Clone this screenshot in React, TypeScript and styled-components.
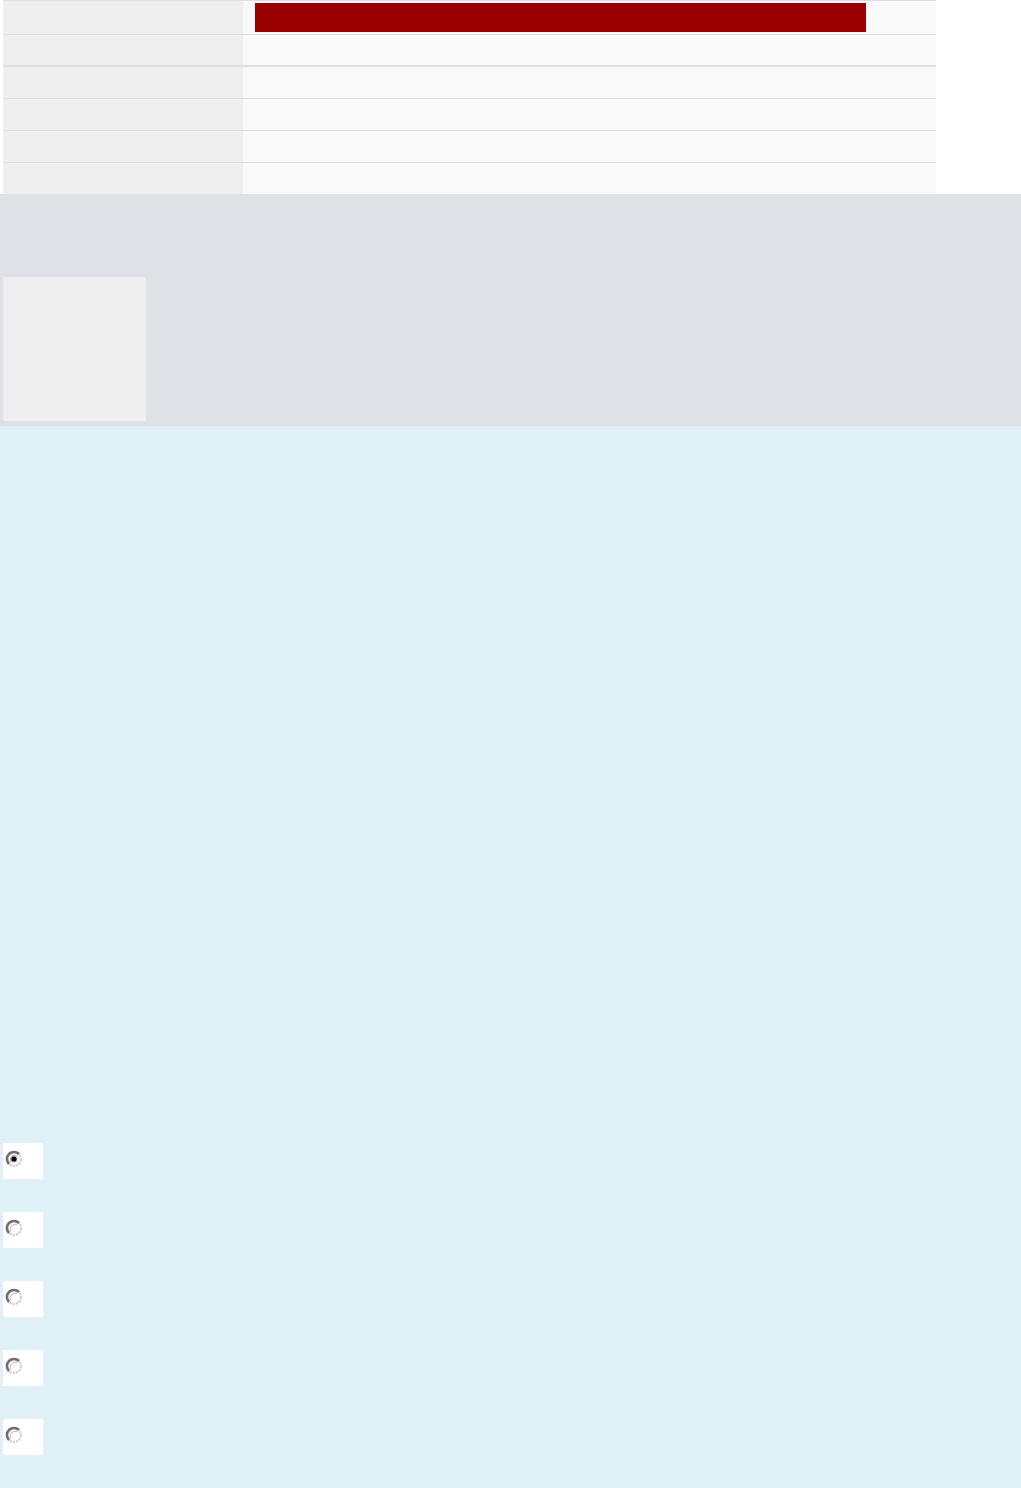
import { createGlobalStyle, styled } from "styled-components";

const GlobalStyle = createGlobalStyle`
  html, body {
    margin: 0;
    padding: 0;
    background: #ffffff;
    font-family: "Liberation Sans", Arial, sans-serif;
  }
`

const rows = [
  { height: 33, line: 1, bar: true },
  { height: 30, line: 2, bar: false },
  { height: 31, line: 1, bar: false },
  { height: 31, line: 1, bar: false },
  { height: 31, line: 1, bar: false },
  { height: 31, line: 0, bar: false },
]

const Radio = ({ checked }: { checked: boolean }) => (
  <svg width="18" height="18" viewBox="0 0 18 18">
    <circle cx="9" cy="9" r="7" fill="#ffffff" stroke="#d2d2d2" strokeWidth="2.2" strokeDasharray="2.4 0.9" />
    <path d="M14 4 A7 7 0 0 0 4 14" fill="none" stroke="#707070" strokeWidth="2.6" />
    <path d="M12.2 5.6 A5 5 0 0 0 5.6 12.2" fill="none" stroke="#b8b8b8" strokeWidth="1" />
    {checked && (
      <>
        <circle cx="9" cy="9" r="3.6" fill="#8a8a8a" opacity="0.5" />
        <circle cx="9" cy="9" r="2.6" fill="#000000" />
      </>
    )}
  </svg>
)

const App = () => {
  return (
    <Page>
      <GlobalStyle />
      <Table>
        {rows.map((r, i) => (
          <Row key={i} $height={r.height} $line={r.line}>
            <LabelCell />
            <ValueCell>{r.bar && <RedBar />}</ValueCell>
          </Row>
        ))}
      </Table>
      <GraySection>
        <Thumb />
      </GraySection>
      <BlueSection>
        {[true, false, false, false, false].map((c, i) => (
          <RadioBox key={i}>
            <Radio checked={c} />
          </RadioBox>
        ))}
      </BlueSection>
    </Page>
  )
}

export default App

const Page = styled.div`
  width: 1021px;
  display: flex;
  flex-direction: column;
`

const Table = styled.div`
  margin-left: 3px;
  width: 933px;
  border-top: 1px solid #dedde6;
  display: flex;
  flex-direction: column;
`

const Row = styled.div<{ $height: number; $line: number }>`
  display: grid;
  grid-template-columns: 240px 1fr;
  height: ${(p) => p.$height}px;
  border-bottom: ${(p) => (p.$line ? `${p.$line}px solid #dedde6` : "none")};
`

const LabelCell = styled.div`
  background: #efefef;
`

const ValueCell = styled.div`
  background: #f9f9f9;
  padding: 2px 0 1px 12px;
`

const RedBar = styled.div`
  width: 611px;
  height: 29px;
  background: #990000;
`

const GraySection = styled.div`
  background: #dee1e5;
  height: 232px;
  box-sizing: border-box;
  padding: 83px 0 5px 3px;
`

const Thumb = styled.div`
  width: 143px;
  height: 144px;
  background: #efefef;
`

const BlueSection = styled.div`
  background: #dff0f6;
  height: 1062px;
  box-sizing: border-box;
  padding: 717px 0 33px 3px;
  display: flex;
  flex-direction: column;
  gap: 33px;
`

const RadioBox = styled.div`
  width: 40px;
  height: 36px;
  background: #ffffff;
  box-sizing: border-box;
  padding: 7px 0 0 2px;
`
